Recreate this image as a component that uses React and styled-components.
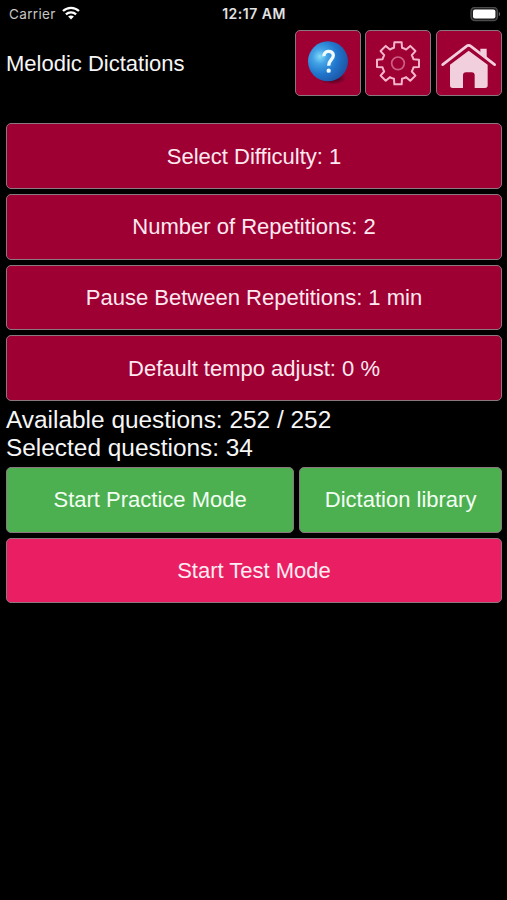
import React from "react";
import styled, { createGlobalStyle } from "styled-components";

const GlobalStyle = createGlobalStyle`
  * { box-sizing: border-box; }
  body { margin: 0; background: #000; }
`;

const Screen = styled.div`
  min-height: 900px;
  display: flex;
  flex-direction: column;
  background: #000;
  color: #f6f6f6;
  font-family: "Liberation Sans", Arial, sans-serif;
  font-size: 22px;
`;

const StatusBar = styled.div`
  height: 30px;
  padding: 0 6px 2px 9px;
  display: grid;
  grid-template-columns: 1fr auto 1fr;
  align-items: center;
  font-family: Inter, sans-serif;
  font-size: 13.5px;
  line-height: 28px;
`;

const Carrier = styled.div`
  display: flex;
  align-items: center;
  gap: 6px;
  color: #c6c6c6;
  letter-spacing: 0.35px;
  svg { margin-top: -2px; }
`;

const Clock = styled.div`
  margin-right: 2px;
  font-weight: 600;
  font-size: 14px;
  color: #e2e2e2;
  letter-spacing: 0.5px;
`;

const BatterySlot = styled.div`
  display: flex;
  justify-content: flex-end;
`;

const Header = styled.header`
  display: flex;
  align-items: center;
  gap: 4.7px;
  height: 66px;
  padding: 0 5px 0 6px;
`;

const Title = styled.h1`
  flex: 1;
  margin: 0;
  padding-top: 1px;
  font-size: 22px;
  font-weight: 400;
  line-height: 26px;
`;

const tones = { crimson: "#9e0034", green: "#4caf50", pink: "#e91e63" };
const inks = { crimson: "#ffe9f0", green: "#f3fff3", pink: "#ffecf2" };

const Button = styled.button`
  display: flex;
  align-items: center;
  justify-content: center;
  flex: ${(p) => p.$grow || "none"};
  height: 65.7px;
  padding: 1px 0 0;
  border: 1px solid #8c7780;
  border-radius: 5px;
  background: ${(p) => tones[p.$tone]};
  color: ${(p) => inks[p.$tone]};
  font: inherit;
  white-space: nowrap;
`;

const IconButton = styled(Button)`
  width: 66px;
  height: 66px;
  padding: 0;
  svg { display: block; flex: none; }
`;

const Menu = styled.main`
  display: flex;
  flex-direction: column;
  gap: 5px;
  padding: 27.3px 5px 0 6px;
`;

const Summary = styled.div`
  height: 56px;
  font-size: 24.42px;
  line-height: 28px;
  white-space: nowrap;
`;

const Actions = styled.div`
  display: flex;
  gap: 5px;
`;

const WifiIcon = () => (
  <svg width="18" height="14" viewBox="0 0 18 14" fill="none" stroke="#fff" strokeWidth="2.3">
    <path d="M1 5C5.6.7 12.4.7 17 5" />
    <path d="M3.9 8.3c2.9-2.7 7.3-2.7 10.2 0" />
    <path d="M9 13.5 6.1 10.6c1.7-1.4 4.1-1.4 5.8 0Z" fill="#fff" stroke="none" />
  </svg>
);

const BatteryIcon = () => (
  <svg width="31" height="15" viewBox="0 0 31 15">
    <rect x="1" y=".3" width="26.4" height="13.4" rx="4" fill="#222" stroke="#4c4c4c" strokeWidth="1.3" />
    <rect x="3" y="2.4" width="22.4" height="9.2" rx="2" fill="#fff" />
    <path d="M28.8 4.7c1.8.8 1.8 3.8 0 4.6Z" fill="#666" />
  </svg>
);

const HelpIcon = () => (
  <svg width="64" height="64" viewBox="17 18 192 192">
    <defs>
      <radialGradient id="ball" cx=".3" cy=".38" r=".72">
        <stop offset="0" stopColor="#86dcf8" />
        <stop offset=".25" stopColor="#43a3e6" />
        <stop offset=".6" stopColor="#2177cd" />
        <stop offset="1" stopColor="#1c55a6" />
      </radialGradient>
      <radialGradient id="shade">
        <stop offset=".3" stopColor="#42001c" stopOpacity=".85" />
        <stop offset="1" stopColor="#42001c" stopOpacity="0" />
      </radialGradient>
    </defs>
    <ellipse cx="127" cy="159" rx="42" ry="20" fill="url(#shade)" />
    <circle cx="113" cy="109" r="60" fill="url(#ball)" />
    <path d="M101 94C98 76 129 74 129 91C129 104 115 104 115 122" fill="none" stroke="#effaff" strokeWidth="10" />
    <circle cx="115" cy="137" r="6.5" fill="#effaff" />
  </svg>
);

/* Eight flat-topped teeth joined by short arcs along the root circle. */
const gearPath = (() => {
  const rotate = (x, y, a) =>
    `${(x * Math.cos(a) - y * Math.sin(a)).toFixed(1)} ${(x * Math.sin(a) + y * Math.cos(a)).toFixed(1)}`;
  let d = "";
  for (let i = 0; i < 8; i += 1) {
    const a = (i * Math.PI) / 4;
    d += `${i ? "A48 48 0 0 1" : "M"} ${rotate(-12, -46.5, a)} L${rotate(-11, -63, a)} L${rotate(11, -63, a)} L${rotate(12, -46.5, a)} `;
  }
  return `${d}A48 48 0 0 1 -12 -46.5Z`;
})();

const GearIcon = () => (
  <svg width="64" height="64" viewBox="-96 -97 192 192" fill="none" stroke="#f3b5cb" strokeLinejoin="round">
    <path d={gearPath} strokeWidth="6" />
    <circle r="19" strokeWidth="5" stroke="#cc5f86" />
  </svg>
);

const HomeIcon = () => (
  <svg width="64" height="64" viewBox="16 18 192 192" fill="#f1cfdd">
    <path d="M33 119 104 64Q111 58 118 64L189 119" fill="none" stroke="#f1cfdd" strokeWidth="8" strokeLinecap="round" strokeLinejoin="round" />
    <path d="M146 77V71H165V98L146 83Z" />
    <path d="M55 119 111 77 168 119V181Q168 189 160 189H129V151Q129 142 120 142H103Q94 142 94 151V189H63Q55 189 55 181Z" />
  </svg>
);

const settings = [
  "Select Difficulty: 1",
  "Number of Repetitions: 2",
  "Pause Between Repetitions: 1 min",
  "Default tempo adjust: 0 %",
];

export default function App() {
  return (
    <Screen>
      <GlobalStyle />
      <StatusBar>
        <Carrier>Carrier <WifiIcon /></Carrier>
        <Clock>12:17 AM</Clock>
        <BatterySlot><BatteryIcon /></BatterySlot>
      </StatusBar>
      <Header>
        <Title>Melodic Dictations</Title>
        <IconButton $tone="crimson" aria-label="Help"><HelpIcon /></IconButton>
        <IconButton $tone="crimson" aria-label="Settings"><GearIcon /></IconButton>
        <IconButton $tone="crimson" aria-label="Home"><HomeIcon /></IconButton>
      </Header>
      <Menu>
        {settings.map((label) => (
          <Button key={label} $tone="crimson">{label}</Button>
        ))}
        <Summary>
          <div>Available questions: 252 / 252</div>
          <div>Selected questions: 34</div>
        </Summary>
        <Actions>
          <Button $tone="green" $grow="0 0 288.2px">Start Practice Mode</Button>
          <Button $tone="green" $grow="1">Dictation library</Button>
        </Actions>
        <Button $tone="pink">Start Test Mode</Button>
      </Menu>
    </Screen>
  );
}
